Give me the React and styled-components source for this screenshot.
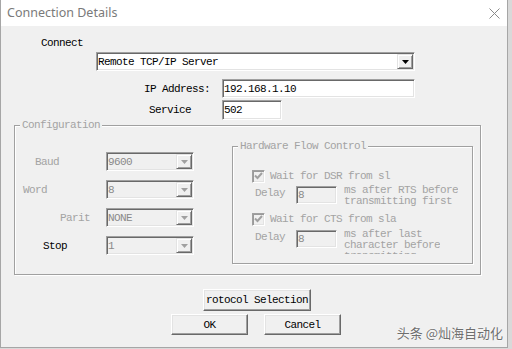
import React from 'react';
import styled, { createGlobalStyle } from 'styled-components';

const GlobalStyle = createGlobalStyle`
  html, body {
    margin: 0;
    padding: 0;
  }
  body {
    width: 512px;
    height: 349px;
    overflow: hidden;
    background: #d9d9d9;
  }
`;

const Window = styled.div`
  position: relative;
  width: 508px;
  height: 348px;
  box-sizing: border-box;
  background: #f0f0f0;
  border: 1px solid #a6a6a6;
  border-top: none;
  font-family: 'Liberation Mono', 'DejaVu Sans Mono', monospace;
  font-size: 11px;
  letter-spacing: -0.6px;
  color: #000;
`;

const TitleBar = styled.div`
  display: flex;
  align-items: center;
  justify-content: space-between;
  height: 26px;
  padding: 0 7px 0 6px;
  background: #fff;
`;

const Title = styled.span`
  font-family: 'Noto Sans', 'Open Sans', sans-serif;
  font-size: 12.5px;
  letter-spacing: 0;
  color: #7a7a7a;
  margin-top: -1px;
`;

const Body = styled.div`
  display: flex;
  flex-direction: column;
`;

const Row = styled.div`
  display: flex;
  align-items: ${(p) => p.$align || 'center'};
  height: ${(p) => p.$h}px;
  margin-top: ${(p) => p.$mt || 0}px;
  padding-left: ${(p) => p.$pl || 0}px;
  gap: ${(p) => p.$gap || 0}px;
`;

const Label = styled.span`
  box-sizing: border-box;
  width: ${(p) => (p.$w ? `${p.$w}px` : 'auto')};
  padding-left: ${(p) => p.$indent || 0}px;
  color: ${(p) => (p.$disabled ? '#a3a3a3' : '#000')};
  white-space: pre;
  line-height: 14px;
`;

const Field = styled.div`
  display: flex;
  align-items: center;
  box-sizing: border-box;
  width: ${(p) => p.$w}px;
  height: ${(p) => p.$h || 19}px;
  background: ${(p) => (p.$disabled ? '#f0f0f0' : '#fff')};
  border: 1px solid;
  border-color: #a0a0a0 #fff #fff #a0a0a0;
  box-shadow: inset 1px 1px 0 #696969, inset -1px -1px 0 #e3e3e3;
`;

const Value = styled.span`
  flex: 1;
  padding-left: 1px;
  color: ${(p) => (p.$disabled ? '#8a8a8a' : '#000')};
  white-space: pre;
  overflow: hidden;
`;

const DropButton = styled.span`
  display: flex;
  align-items: center;
  justify-content: center;
  box-sizing: border-box;
  width: 16px;
  height: 15px;
  margin-right: 1px;
  background: #f0f0f0;
  border: 1px solid;
  border-color: #e3e3e3 #696969 #696969 #e3e3e3;
  box-shadow: inset 1px 1px 0 #fff, inset -1px -1px 0 #a0a0a0;
`;

const GroupBox = styled.fieldset`
  box-sizing: border-box;
  min-inline-size: 0;
  width: ${(p) => p.$w}px;
  height: ${(p) => p.$h}px;
  margin: ${(p) => p.$mt || 0}px 0 0 ${(p) => p.$ml || 0}px;
  padding: 0;
  border: 1px solid #a0a0a0;
  box-shadow: inset 1px 1px 0 #fff, 1px 1px 0 #fff;
`;

const Legend = styled.legend`
  margin-left: 5px;
  padding: 0 2px;
  line-height: 10px;
  color: #a3a3a3;
  background: #f0f0f0;
`;

const ConfigLayout = styled.div`
  display: flex;
  align-items: flex-start;
`;

const LeftColumn = styled.div`
  display: flex;
  flex-direction: column;
  gap: 9px;
  padding-top: 22px;
`;

const CheckBox = styled.span`
  display: flex;
  align-items: center;
  justify-content: center;
  box-sizing: border-box;
  width: 13px;
  height: 13px;
  margin-right: 5px;
  background: #f0f0f0;
  border: 1px solid;
  border-color: #a0a0a0 #fff #fff #a0a0a0;
  box-shadow: inset 1px 1px 0 #9a9a9a, inset -1px -1px 0 #e3e3e3;
`;

const Note = styled.div`
  margin-left: 7px;
  margin-top: -1px;
  line-height: 11px;
  max-height: ${(p) => p.$clip}px;
  overflow: hidden;
  color: #a3a3a3;
  white-space: pre;
`;

const Button = styled.button`
  box-sizing: border-box;
  width: ${(p) => p.$w}px;
  height: ${(p) => p.$h}px;
  padding: 0;
  font: inherit;
  letter-spacing: inherit;
  color: #000;
  background: #f0f0f0;
  border: 1px solid;
  border-color: #fff #696969 #696969 #fff;
  box-shadow: inset -1px -1px 0 #a0a0a0, inset 1px 1px 0 #e3e3e3;
`;

const Watermark = styled.span`
  position: absolute;
  right: 4px;
  bottom: 5px;
  font-family: 'Noto Sans CJK SC', 'Noto Sans', sans-serif;
  font-size: 13px;
  letter-spacing: 0;
  color: #6e6e6e;
  text-shadow: 0 0 2px #fff, 0 0 1px #fff;
`;

function Arrow({ disabled }) {
  return (
    <svg width="7" height="4" viewBox="0 0 7 4">
      <path d="M0 0H7L3.5 4Z" fill={disabled ? '#a0a0a0' : '#000'} />
    </svg>
  );
}

function Combo({ w, value, disabled }) {
  return (
    <Field $w={w} $disabled={disabled}>
      <Value $disabled={disabled}>{value}</Value>
      <DropButton>
        <Arrow disabled={disabled} />
      </DropButton>
    </Field>
  );
}

function CheckRow({ mt, children }) {
  return (
    <Row $h={14} $pl={19} $mt={mt}>
      <CheckBox>
        <svg width="9" height="8" viewBox="0 0 9 8">
          <path d="M1 3.5L3.5 6L8 1" stroke="#a0a0a0" strokeWidth="2" fill="none" />
        </svg>
      </CheckBox>
      <Label $disabled>{children}</Label>
    </Row>
  );
}

function DelayRow({ mt, clip, lines }) {
  return (
    <Row $h={24} $mt={mt} $pl={22} $align="flex-start">
      <Label $w={41} $disabled>Delay</Label>
      <Field $w={41} $h={18} $disabled>
        <Value $disabled>8</Value>
      </Field>
      <Note $clip={clip}>{lines.join('\n')}</Note>
    </Row>
  );
}

const configRows = [
  { label: 'Baud', indent: 20, value: '9600' },
  { label: 'Word', indent: 8, value: '8' },
  { label: 'Parit', indent: 45, value: 'NONE' },
  { label: 'Stop', indent: 28, value: '1', enabled: true },
];

export default function App() {
  return (
    <>
      <GlobalStyle />
      <Window>
        <TitleBar>
          <Title>Connection Details</Title>
          <svg width="11" height="11" viewBox="0 0 11 11">
            <path d="M0.5 0.5L10.5 10.5M10.5 0.5L0.5 10.5" stroke="#8a8a8a" strokeWidth="1" />
          </svg>
        </TitleBar>
        <Body>
          <Row $h={14} $mt={10}>
            <Label $indent={40}>Connect</Label>
          </Row>
          <Row $h={19} $mt={2} $pl={95}>
            <Combo w={319} value="Remote TCP/IP Server" />
          </Row>
          <Row $h={19} $mt={8}>
            <Label $w={221} $indent={143}>IP Address:</Label>
            <Field $w={193}>
              <Value>192.168.1.10</Value>
            </Field>
          </Row>
          <Row $h={20} $mt={2}>
            <Label $w={221} $indent={148}>Service</Label>
            <Field $w={60} $h={20}>
              <Value>502</Value>
            </Field>
          </Row>

          <GroupBox $w={467} $h={155} $ml={13}>
            <Legend>Configuration</Legend>
            <ConfigLayout>
              <LeftColumn>
                {configRows.map((r) => (
                  <Row key={r.label} $h={19}>
                    <Label $w={91} $indent={r.indent} $disabled={!r.enabled}>{r.label}</Label>
                    <Combo w={88} value={r.value} disabled />
                  </Row>
                ))}
              </LeftColumn>
              <GroupBox $w={241} $h={123} $ml={38} $mt={11}>
                <Legend>Hardware Flow Control</Legend>
                <CheckRow mt={18}>Wait for DSR from sl</CheckRow>
                <DelayRow mt={3} clip={22} lines={['ms after RTS before', 'transmitting first']} />
                <CheckRow mt={2}>Wait for CTS from sla</CheckRow>
                <DelayRow mt={4} clip={25} lines={['ms after last', 'character before', 'transmitting']} />
              </GroupBox>
            </ConfigLayout>
          </GroupBox>

          <Row $h={22} $mt={14} $pl={202}>
            <Button $w={108} $h={22}>rotocol Selection</Button>
          </Row>
          <Row $h={21} $mt={3} $pl={170} $gap={16}>
            <Button $w={77} $h={21}>OK</Button>
            <Button $w={77} $h={21}>Cancel</Button>
          </Row>
        </Body>
        <Watermark>头条 @灿海自动化</Watermark>
      </Window>
    </>
  );
}
